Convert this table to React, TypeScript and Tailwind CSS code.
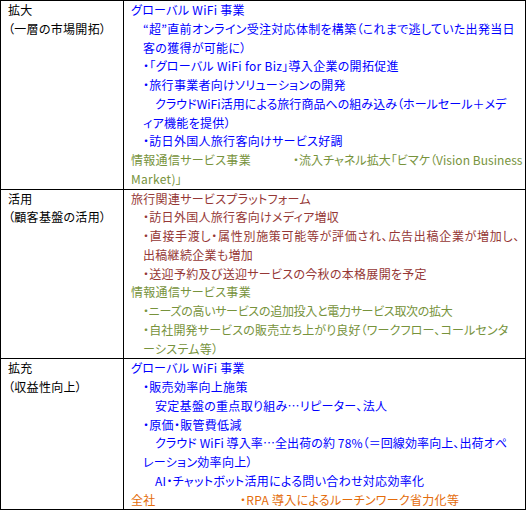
const blue = 'text-[#0000ff]';
const olive = 'text-[#77933c]';
const red = 'text-[#953735]';
const orange = 'text-[#e46c0a]';

function Line({ indent = 0, className = '', children }: { indent?: 0 | 1 | 2; className?: string; children: React.ReactNode }) {
    const pad = indent === 2 ? 'pl-6' : indent === 1 ? 'pl-3' : '';
    return <div className={`whitespace-nowrap ${pad} ${className}`}>{children}</div>;
}

function Row({ title, sub, children, last = false }: { title: string; sub: string; children: React.ReactNode; last?: boolean }) {
    return (
        <div className={`grid grid-cols-[123px_1fr] ${last ? '' : 'border-b border-black'}`}>
            <div className="border-r border-black pl-[7px] text-black">
                <div>{title}</div>
                <div>{sub}</div>
            </div>
            <div className="pl-[7px]">{children}</div>
        </div>
    );
}

export default function App() {
    return (
        <div className="bg-white w-[530px] h-[510px]">
            <div
                className="w-[526px] border border-black text-[12px] leading-[18.75px] tracking-[0.3px] [font-feature-settings:'palt']"
                style={{ fontFamily: '"Noto Sans CJK JP", "Noto Sans", sans-serif' }}
            >
                {/* 拡大 */}
                <Row title="拡大" sub="（一層の市場開拓）">
                    <div className={blue}>
                        <Line>グローバル WiFi 事業</Line>
                        <Line indent={1}>“超”直前オンライン受注対応体制を構築（これまで逃していた出発当日</Line>
                        <Line indent={1}>客の獲得が可能に）</Line>
                        <Line indent={1}>・「グローバル WiFi for Biz」導入企業の開拓促進</Line>
                        <Line indent={1}>・旅行事業者向けソリューションの開発</Line>
                        <Line indent={2} className="tracking-[0.05px]">クラウドWiFi活用による旅行商品への組み込み（ホールセール＋メデ</Line>
                        <Line indent={1}>ィア機能を提供）</Line>
                        <Line indent={1}>・訪日外国人旅行客向けサービス好調</Line>
                    </div>
                    <div className={olive}>
                        <Line className="flex tracking-[0.05px]">
                            <span className="w-[162px] shrink-0 tracking-[0.3px]">情報通信サービス事業</span>
                            <span>・流入チャネル拡大「ビマケ（Vision Business</span>
                        </Line>
                        <Line>Market)」</Line>
                    </div>
                </Row>

                {/* 活用 */}
                <Row title="活用" sub="（顧客基盤の活用）">
                    <div className={red}>
                        <Line>旅行関連サービスプラットフォーム</Line>
                        <Line indent={1}>・訪日外国人旅行客向けメディア増収</Line>
                        <Line indent={1} className="tracking-[0.7px]">・直接手渡し・属性別施策可能等が評価され、広告出稿企業が増加し、</Line>
                        <Line indent={1}>出稿継続企業も増加</Line>
                        <Line indent={1}>・送迎予約及び送迎サービスの今秋の本格展開を予定</Line>
                    </div>
                    <div className={olive}>
                        <Line>情報通信サービス事業</Line>
                        <Line indent={1} className="tracking-[-0.3px]">・ニーズの高いサービスの追加投入と電力サービス取次の拡大</Line>
                        <Line indent={1} className="tracking-[0.15px]">・自社開発サービスの販売立ち上がり良好（ワークフロー、コールセンタ</Line>
                        <Line indent={1}>ーシステム等）</Line>
                    </div>
                </Row>

                {/* 拡充 */}
                <Row title="拡充" sub="（収益性向上）" last>
                    <div className={blue}>
                        <Line>グローバル WiFi 事業</Line>
                        <Line indent={1}>・販売効率向上施策</Line>
                        <Line indent={2}>安定基盤の重点取り組み…リピーター、法人</Line>
                        <Line indent={1}>・原価・販管費低減</Line>
                        <Line indent={2} className="tracking-[0.1px]">クラウド WiFi 導入率…全出荷の約 78%（＝回線効率向上、出荷オペ</Line>
                        <Line indent={1}>レーション効率向上）</Line>
                        <Line indent={2}>AI・チャットボット活用による問い合わせ対応効率化</Line>
                    </div>
                    <Line className={`flex ${orange}`}>
                        <span className="w-[109px] shrink-0">全社</span>
                        <span>・RPA 導入によるルーチンワーク省力化等</span>
                    </Line>
                </Row>
            </div>
        </div>
    );
}
